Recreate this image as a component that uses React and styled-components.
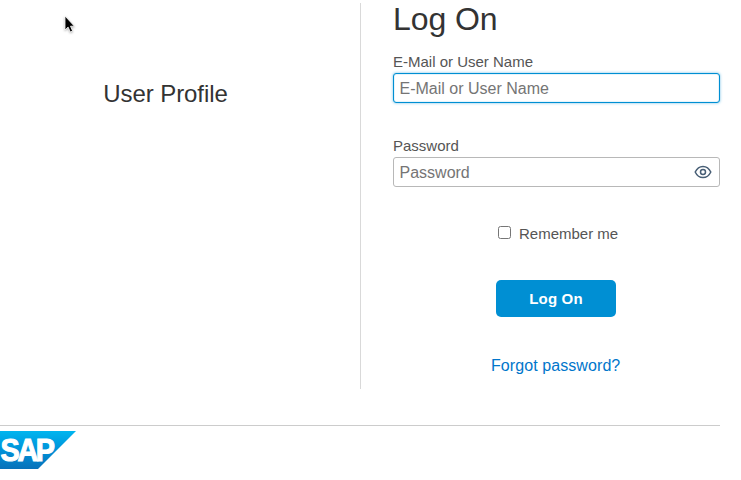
import React from "react";
import styled, { createGlobalStyle } from "styled-components";

const GlobalStyle = createGlobalStyle`
  *, *::before, *::after { box-sizing: border-box; }
  body {
    margin: 0;
    background: #fff;
    color: #333;
    font-family: "Liberation Sans", Helvetica, Arial, sans-serif;
    overflow: hidden;
  }
`;

const Page = styled.div`
  position: relative;
  width: 741px;
  height: 480px;
  padding-right: 21px;
`;

const Main = styled.main`
  display: grid;
  grid-template-columns: 361px 1fr;
  height: 389px;
  padding-top: 3px;
`;

const Profile = styled.section`
  border-right: 1px solid #d9d9d9;
  padding: 77px 29px 0 0;
  text-align: center;
`;

const ProfileTitle = styled.h2`
  margin: 0;
  font-size: 24px;
  font-weight: 400;
  line-height: 28px;
  letter-spacing: -0.08px;
`;

const Form = styled.form`
  display: flex;
  flex-direction: column;
  padding-left: 32px;
`;

const Title = styled.h1`
  margin: -2px 0 16px;
  font-size: 32px;
  font-weight: 400;
  line-height: 36px;
  letter-spacing: -0.1px;
`;

const Field = styled.div`
  display: flex;
  flex-direction: column;
  height: 84px;
`;

const Label = styled.label`
  height: 20px;
  color: #555;
  font-size: 15px;
  line-height: 18px;
`;

const InputBox = styled.div`
  display: flex;
  align-items: center;
  height: 30px;
  padding: 0 7px 0 5.5px;
  border: 1px solid ${(p) => (p.$active ? "#008fd3" : "#b8b8b8")};
  border-radius: 3px;
  box-shadow: ${(p) => (p.$active ? "0 0 3px #73bfe5, inset 0 0 1px #008fd3" : "none")};
`;

const Input = styled.input`
  flex: 1;
  min-width: 0;
  height: 28px;
  padding: 1px 0 0;
  border: 0;
  outline: 0;
  background: transparent;
  font: 16px "Liberation Sans", Helvetica, Arial, sans-serif;
  &::placeholder { color: #757575; }
`;

const Remember = styled.label`
  display: flex;
  align-items: center;
  gap: 8px;
  height: 18px;
  margin: 4px 0 0 105px;
  color: #555;
  font-size: 15px;
  line-height: 18px;
`;

const Checkbox = styled.input`
  appearance: none;
  width: 13px;
  height: 13px;
  margin: 0 0 3px;
  border: 1px solid #767676;
  border-radius: 2.5px;
`;

const Submit = styled.button`
  width: 120px;
  height: 37px;
  margin: 37px 0 0 103px;
  padding: 1px 0 0;
  border: 0;
  border-radius: 5px;
  background: #008fd3;
  color: #fff;
  font: bold 15px/36px "Liberation Sans", Helvetica, Arial, sans-serif;
  letter-spacing: 0.2px;
`;

const Forgot = styled.a`
  align-self: flex-start;
  margin: 40px 0 0 98px;
  color: #0076cb;
  font-size: 16px;
  line-height: 18px;
  letter-spacing: 0.08px;
  text-decoration: none;
`;

const Footer = styled.footer`
  margin-top: 36px;
  padding-top: 5px;
  border-top: 1px solid #ccc;
`;

const Logo = styled.svg`
  display: block;
  width: 76px;
  height: 38px;
`;

const Pointer = styled.svg`
  position: absolute;
  left: 62px;
  top: 14px;
  width: 14px;
  height: 21px;
  filter: drop-shadow(0 1px 1px rgba(0, 0, 0, 0.3));
`;

const EyeIcon = () => (
  <svg width="18" height="14" viewBox="0 0 18 14" fill="none" stroke="#475e75" strokeWidth="1.5">
    <path d="M1.2 7C3 3.2 5.8 1.4 9 1.4S15 3.2 16.8 7C15 10.8 12.2 12.6 9 12.6S3 10.8 1.2 7Z" />
    <circle cx="9" cy="7" r="2.5" />
  </svg>
);

const SapLogo = () => (
  <Logo viewBox="0 0 76 38" role="img" aria-label="SAP">
    <defs>
      <linearGradient id="sapBlue" x1="0" y1="0" x2="0" y2="1">
        <stop offset="0" stopColor="#00b5ef" />
        <stop offset="0.5" stopColor="#0092d9" />
        <stop offset="1" stopColor="#0871b9" />
      </linearGradient>
    </defs>
    <path d="M0 0H76L38 38H0Z" fill="url(#sapBlue)" />
    <text
      transform="translate(0.6 30) scale(0.93 1)"
      fill="#fff"
      stroke="#fff"
      strokeWidth="1.1"
      fontFamily="Liberation Sans, Arial, sans-serif"
      fontSize="31"
      fontWeight="700"
      letterSpacing="-2.6"
    >
      SAP
    </text>
  </Logo>
);

export default function App() {
  return (
    <>
      <GlobalStyle />
      <Page>
        <Main>
          <Profile>
            <ProfileTitle>User Profile</ProfileTitle>
          </Profile>
          <Form onSubmit={(e) => e.preventDefault()}>
            <Title>Log On</Title>
            <Field>
              <Label htmlFor="user">E-Mail or User Name</Label>
              <InputBox $active>
                <Input id="user" placeholder="E-Mail or User Name" />
              </InputBox>
            </Field>
            <Field>
              <Label htmlFor="password">Password</Label>
              <InputBox>
                <Input id="password" type="password" placeholder="Password" />
                <EyeIcon />
              </InputBox>
            </Field>
            <Remember>
              <Checkbox type="checkbox" />
              Remember me
            </Remember>
            <Submit type="submit">Log On</Submit>
            <Forgot href="#">Forgot password?</Forgot>
          </Form>
        </Main>
        <Footer>
          <SapLogo />
        </Footer>
        <Pointer viewBox="0 0 14 21" aria-hidden="true">
          <path
            d="M3 2V16L6.1 13.1L8.3 18L10.6 17L8.5 12.2H12.4Z"
            fill="#000"
            stroke="#fff"
            strokeWidth="0.8"
          />
        </Pointer>
      </Page>
    </>
  );
}
